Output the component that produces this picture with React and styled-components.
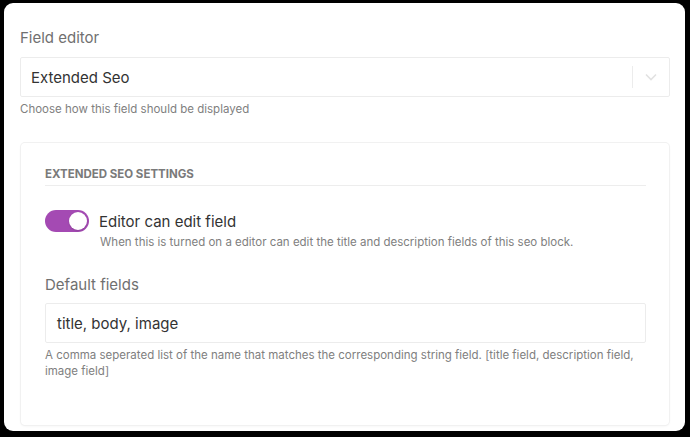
import styled, { createGlobalStyle } from "styled-components";

const GlobalStyle = createGlobalStyle`
  html, body {
    margin: 0;
    padding: 0;
    background: #000;
  }
  body {
    font-family: Inter, "Noto Sans", sans-serif;
    -webkit-font-smoothing: antialiased;
  }
`;

const Frame = styled.div`
  box-sizing: border-box;
  height: 428px;
  margin: 3px 5px 6px 4px;
  background: #fff;
  border-radius: 9px;
  padding: 25px 15px 0 16px;
  overflow: hidden;
`;

const Label = styled.div`
  font-size: 15px;
  color: #707070;
  line-height: 20px;
  margin-bottom: ${p => p.gap || 9}px;
`;

const Select = styled.div`
  box-sizing: border-box;
  height: 40px;
  border: 1px solid #ececec;
  border-radius: 2px;
  display: flex;
  align-items: center;
  padding-left: 10px;
`;

const SelectValue = styled.div`
  flex: 1;
  font-size: 15px;
  color: #333;
`;

const Divider = styled.span`
  width: 1px;
  height: 22px;
  background: #ececec;
`;

const Arrow = styled.div`
  width: 36px;
  display: flex;
  justify-content: center;
  align-items: center;
`;

const Hint = styled.div`
  font-size: 11.5px;
  line-height: 16px;
  color: #808080;
  margin-top: ${p => p.top || 4}px;
  padding-left: ${p => p.indent || 0}px;
`;

const Card = styled.div`
  box-sizing: border-box;
  margin: 26px 1px 0 1px;
  height: 282px;
  border-radius: 4px;
  box-shadow: 0 0 0 1px #f1f1f1, 0 1px 3px rgba(0, 0, 0, 0.06);
  padding: 24px 23px 0 24px;
`;

const SectionTitle = styled.div`
  font-size: 11.5px;
  font-weight: 700;
  color: #7a7a7a;
  text-transform: uppercase;
  padding-bottom: 4px;
  border-bottom: 1px solid #ededed;
`;

const ToggleRow = styled.div`
  display: flex;
  align-items: center;
  gap: 10px;
  margin-top: 24px;
`;

const Switch = styled.div`
  position: relative;
  width: 44px;
  height: 22px;
  border-radius: 11px;
  background: ${p => (p.on ? "#a44ab3" : "#ccc")};
  flex-shrink: 0;
`;

const Knob = styled.span`
  position: absolute;
  top: 2px;
  left: ${p => (p.on ? 24 : 2)}px;
  width: 18px;
  height: 18px;
  border-radius: 50%;
  background: #fff;
  box-shadow: 0 1px 2px rgba(0, 0, 0, 0.15);
`;

const ToggleLabel = styled.div`
  font-size: 15px;
  color: #333;
`;

const Input = styled.div`
  box-sizing: border-box;
  height: 40px;
  border: 1px solid #ececec;
  border-radius: 2px;
  display: flex;
  align-items: center;
  padding-left: 11px;
  font-size: 15px;
  color: #333;
`;

const Spacer = styled.div`
  height: ${p => p.h}px;
`;

export default function App() {
  return (
    <>
      <GlobalStyle />
      <Frame>
        <Label>Field editor</Label>
        <Select>
          <SelectValue>Extended Seo</SelectValue>
          <Divider />
          <Arrow>
            <svg width="12" height="8" viewBox="0 0 12 8">
              <path d="M1 1.5l5 5 5-5" fill="none" stroke="#e2e2e2" strokeWidth="1.6" />
            </svg>
          </Arrow>
        </Select>
        <Hint top={4}>Choose how this field should be displayed</Hint>

        <Card>
          <SectionTitle>Extended SEO settings</SectionTitle>
          <ToggleRow>
            <Switch on>
              <Knob on />
            </Switch>
            <ToggleLabel>Editor can edit field</ToggleLabel>
          </ToggleRow>
          <Hint top={2} indent={55}>
            When this is turned on a editor can edit the title and description fields of this seo block.
          </Hint>

          <Spacer h={25} />
          <Label gap={8}>Default fields</Label>
          <Input>title, body, image</Input>
          <Hint top={4}>
            A comma seperated list of the name that matches the corresponding string field. [title field, description field, image field]
          </Hint>
        </Card>
      </Frame>
    </>
  );
}
